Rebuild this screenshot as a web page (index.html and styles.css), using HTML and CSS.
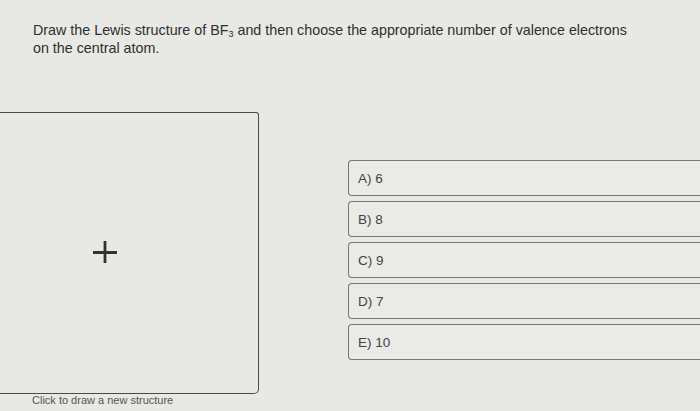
FILE: index.html
```html
<!DOCTYPE html>
<html lang="en">
<head>
    <meta charset="UTF-8">
    <meta name="viewport" content="width=device-width, initial-scale=1.0">
    <title>Question</title>
    <link rel="stylesheet" href="styles.css">
</head>
<body>

    <p class="question">Draw the Lewis structure of BF<span class="sub">3</span> and then choose the appropriate number of valence electrons on the central atom.</p>

    <div class="content">
        <div class="drawing">
            <div class="canvas">
                <svg class="plus" width="24" height="22" viewBox="0 0 24 22">
                    <path d="M0 11.5H24M12 0V22" stroke="#333" stroke-width="2.8" fill="none"/>
                </svg>
            </div>
            <div class="caption">Click to draw a new structure</div>
        </div>

        <div class="choices">
            <div class="choice">A) 6</div>
            <div class="choice">B) 8</div>
            <div class="choice">C) 9</div>
            <div class="choice">D) 7</div>
            <div class="choice">E) 10</div>
        </div>
    </div>

</body>
</html>
```

FILE: styles.css
```css
body {
    font-family: "Liberation Sans", Arial, sans-serif;
    margin: 0;
    background-color: #e8e8e5;
    color: #333;
    overflow: hidden;
    height: 411px;
}
.question {
    margin: 0;
    padding: 21px 0 0 33px;
    max-width: 610px;
    font-size: 14.3px;
    line-height: 18px;
    color: #2f2f2f;
}
.question .sub {
    display: inline-block;
    font-size: 9px;
    line-height: 9px;
    vertical-align: -2px;
}
.content {
    display: flex;
    margin-top: 55px;
}
.drawing {
    width: 259px;
    flex-shrink: 0;
}
.canvas {
    height: 280px;
    border: 1.5px solid #4a4a4a;
    border-left: none;
    border-radius: 0 3px 5px 0;
    display: flex;
    align-items: center;
    justify-content: center;
    padding-right: 48px;
}
.plus {
    margin-top: -3px;
}
.caption {
    margin: 0 0 0 32px;
    font-size: 11px;
    color: #555;
}
.choices {
    display: flex;
    flex-direction: column;
    gap: 5px;
    margin: 48px 0 0 89px;
    flex: 1;
}
.choice {
    box-sizing: border-box;
    height: 36px;
    padding-left: 9px;
    display: flex;
    align-items: center;
    border: 1.5px solid #777;
    border-right: none;
    border-radius: 4px 0 0 4px;
    font-size: 13.5px;
    color: #444;
    background-color: #eaeae7;
}
```
